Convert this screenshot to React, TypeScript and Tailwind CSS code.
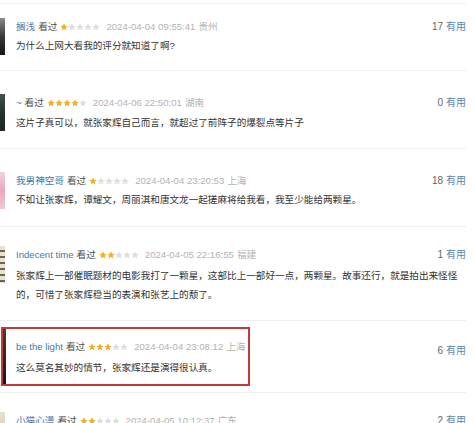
import React from 'react';

type Comment = {
    name: string;
    stars: number;
    date: string;
    loc: string;
    lines: string[];
    votes: number;
    avatar: string;
    box: string;
    bodyGap: string;
    lineHeight: string;
};

const comments: Comment[] = [
    {
        name: '搁浅', stars: 1, date: '2024-04-04 09:55:41', loc: '贵州',
        lines: ['为什么上网大看我的评分就知道了啊?'], votes: 17,
        avatar: 'bg-gradient-to-b from-[#8a8a8a] via-[#3a3a3a] to-[#151515]',
        box: 'h-[66px] pt-[14px]', bodyGap: 'mt-[6px]', lineHeight: 'leading-[14px]',
    },
    {
        name: '~', stars: 4, date: '2024-04-06 22:50:01', loc: '湖南',
        lines: ['这片子真可以，就张家辉自己而言，就超过了前阵子的爆裂点等片子'], votes: 0,
        avatar: 'bg-gradient-to-b from-[#3f5450] via-[#24332f] to-[#1c2624]',
        box: 'h-[77px] pt-[23px]', bodyGap: 'mt-[7px]', lineHeight: 'leading-[14px]',
    },
    {
        name: '我男神空哥', stars: 1, date: '2024-04-04 23:20:53', loc: '上海',
        lines: ['不如让张家辉，谭耀文，周丽淇和唐文龙一起搓麻将给我看，我至少能给两颗星。'], votes: 18,
        avatar: 'bg-gradient-to-b from-[#f3d3dc] via-[#e7a9bd] to-[#f0c8d4]',
        box: 'h-[77px] pt-[23px]', bodyGap: 'mt-[6px]', lineHeight: 'leading-[14px]',
    },
    {
        name: 'Indecent time', stars: 2, date: '2024-04-05 22:16:55', loc: '福建',
        lines: [
            '张家辉上一部催眠题材的电影我打了一颗星，这部比上一部好一点，两颗星。故事还行，就是拍出来怪怪',
            '的，可惜了张家辉稳当的表演和张艺上的颓了。',
        ],
        votes: 1,
        avatar: 'bg-[repeating-linear-gradient(180deg,#e9e2d2_0px,#e9e2d2_4px,#6d6355_4px,#6d6355_6px)]',
        box: 'h-[93px] pt-[19px]', bodyGap: 'mt-[5px]', lineHeight: 'leading-[19px]',
    },
];

const Star = ({ on }: { on: boolean }) => (
    <svg width="8" height="8" viewBox="0 0 8 8" className="shrink-0">
        <path
            d="M4 0.3 L5.1 2.8 L7.8 3 L5.7 4.8 L6.4 7.6 L4 6.1 L1.6 7.6 L2.3 4.8 L0.2 3 L2.9 2.8 Z"
            fill={on ? '#f3ae2a' : '#dedede'}
        />
    </svg>
);

const Header = ({ c }: { c: Pick<Comment, 'name' | 'stars' | 'date' | 'loc'> }) => (
    <div className="flex items-center h-[12px] leading-[12px] text-[9.6px] whitespace-nowrap">
        <span className="text-[#3f78ab]">{c.name}</span>
        <span className="ml-[3px] text-[#4a4a4a]">看过</span>
        <span className="ml-[3px] flex">
            {[0, 1, 2, 3, 4].map(i => <Star key={i} on={i < c.stars} />)}
        </span>
        <span className="ml-[6px] text-[#b3b3b3]">{c.date}</span>
        <span className="ml-[3px] text-[#b3b3b3]">{c.loc}</span>
    </div>
);

const Votes = ({ n }: { n: number }) => (
    <div className="shrink-0 pt-[3px] pr-[8px] h-[15px] leading-[12px] text-[10px] whitespace-nowrap">
        <span className="text-[#666]">{n}</span>
        <span className="ml-[3px] text-[#5b86ad]">有用</span>
    </div>
);

const Sep = () => <div className="w-[466px] h-px bg-[#efefef]" />;

const Row = ({ c }: { c: Comment }) => (
    <div className={`flex items-start ${c.box}`}>
        <div className={`w-[5px] h-[37px] shrink-0 ${c.avatar}`} />
        <div className="ml-[11px] pt-[3px] flex-1 min-w-0">
            <Header c={c} />
            <div className={`${c.bodyGap} ${c.lineHeight} text-[9.6px] text-[#333] whitespace-nowrap`}>
                {c.lines.map((l, i) => <div key={i}>{l}</div>)}
            </div>
        </div>
        <Votes n={c.votes} />
    </div>
);

export default function App() {
    return (
        <div className="w-[474px] h-[423px] overflow-hidden bg-white font-[Liberation_Sans,Noto_Sans_CJK_SC,sans-serif]">
            <div className="h-[3px]" />
            <Sep />
            {comments.map((c, i) => (
                <React.Fragment key={i}>
                    <Row c={c} />
                    <Sep />
                </React.Fragment>
            ))}

            {/* highlighted comment */}
            <div className="h-[71px] pt-[6px] flex items-start">
                <div className="ml-px w-[249px] h-[59px] border-2 border-[#c23b3b] flex items-start">
                    <div className="w-[3px] h-[55px] shrink-0 bg-gradient-to-b from-[#4a3b30] to-[#1b1512]" />
                    <div className="ml-[10px] pt-[12px]">
                        <Header c={{ name: 'be the light', stars: 3, date: '2024-04-04 23:08:12', loc: '上海' }} />
                        <div className="mt-[8px] leading-[14px] text-[9.6px] text-[#333] whitespace-nowrap">
                            这么莫名其妙的情节，张家辉还是演得很认真。
                        </div>
                    </div>
                </div>
                <div className="flex-1" />
                <div className="pt-[15px]">
                    <Votes n={6} />
                </div>
            </div>
            <Sep />

            <div className="flex items-start pt-[19px]">
                <div className="w-[5px] h-[37px] shrink-0 bg-gradient-to-b from-[#e8e0cf] to-[#cfc3a8]" />
                <div className="ml-[11px] pt-[3px] flex-1 min-w-0">
                    <Header c={{ name: '小猫心漫', stars: 2, date: '2024-04-05 10:12:37', loc: '广东' }} />
                </div>
                <Votes n={2} />
            </div>
        </div>
    );
}
